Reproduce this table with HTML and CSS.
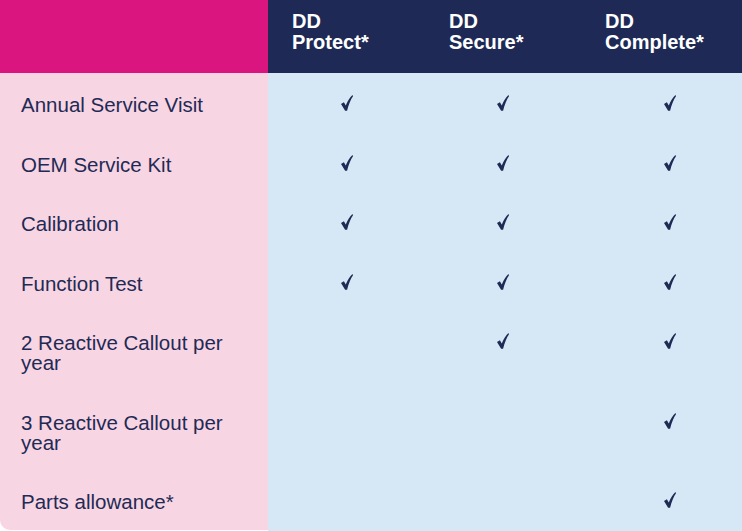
FILE: index.html
```html
<!DOCTYPE html>
<html lang="en">
<head>
<meta charset="utf-8">
<title>DD Plans</title>
<link rel="stylesheet" href="styles.css">
</head>
<body>
<div class="table">
  <div class="cell head head-label"></div>
  <div class="cell head head-plan"><span>DD</span><span>Protect*</span></div>
  <div class="cell head head-plan"><span>DD</span><span>Secure*</span></div>
  <div class="cell head head-plan"><span>DD</span><span>Complete*</span></div>

  <div class="cell label">Annual Service Visit</div>
  <div class="cell mark c1"><svg class="tick" viewBox="0 0 12 16"><path d="M0 9 L2.9 7.3 L4.8 10.6 C6.6 6 8.8 2.6 11.5 0.1 L12 1.2 C9.6 4.6 7.7 9.4 6.1 15.7 L4.1 15.7 Z"/></svg></div>
  <div class="cell mark c2"><svg class="tick" viewBox="0 0 12 16"><path d="M0 9 L2.9 7.3 L4.8 10.6 C6.6 6 8.8 2.6 11.5 0.1 L12 1.2 C9.6 4.6 7.7 9.4 6.1 15.7 L4.1 15.7 Z"/></svg></div>
  <div class="cell mark c3"><svg class="tick" viewBox="0 0 12 16"><path d="M0 9 L2.9 7.3 L4.8 10.6 C6.6 6 8.8 2.6 11.5 0.1 L12 1.2 C9.6 4.6 7.7 9.4 6.1 15.7 L4.1 15.7 Z"/></svg></div>

  <div class="cell label">OEM Service Kit</div>
  <div class="cell mark c1"><svg class="tick" viewBox="0 0 12 16"><path d="M0 9 L2.9 7.3 L4.8 10.6 C6.6 6 8.8 2.6 11.5 0.1 L12 1.2 C9.6 4.6 7.7 9.4 6.1 15.7 L4.1 15.7 Z"/></svg></div>
  <div class="cell mark c2"><svg class="tick" viewBox="0 0 12 16"><path d="M0 9 L2.9 7.3 L4.8 10.6 C6.6 6 8.8 2.6 11.5 0.1 L12 1.2 C9.6 4.6 7.7 9.4 6.1 15.7 L4.1 15.7 Z"/></svg></div>
  <div class="cell mark c3"><svg class="tick" viewBox="0 0 12 16"><path d="M0 9 L2.9 7.3 L4.8 10.6 C6.6 6 8.8 2.6 11.5 0.1 L12 1.2 C9.6 4.6 7.7 9.4 6.1 15.7 L4.1 15.7 Z"/></svg></div>

  <div class="cell label">Calibration</div>
  <div class="cell mark c1"><svg class="tick" viewBox="0 0 12 16"><path d="M0 9 L2.9 7.3 L4.8 10.6 C6.6 6 8.8 2.6 11.5 0.1 L12 1.2 C9.6 4.6 7.7 9.4 6.1 15.7 L4.1 15.7 Z"/></svg></div>
  <div class="cell mark c2"><svg class="tick" viewBox="0 0 12 16"><path d="M0 9 L2.9 7.3 L4.8 10.6 C6.6 6 8.8 2.6 11.5 0.1 L12 1.2 C9.6 4.6 7.7 9.4 6.1 15.7 L4.1 15.7 Z"/></svg></div>
  <div class="cell mark c3"><svg class="tick" viewBox="0 0 12 16"><path d="M0 9 L2.9 7.3 L4.8 10.6 C6.6 6 8.8 2.6 11.5 0.1 L12 1.2 C9.6 4.6 7.7 9.4 6.1 15.7 L4.1 15.7 Z"/></svg></div>

  <div class="cell label">Function Test</div>
  <div class="cell mark c1"><svg class="tick" viewBox="0 0 12 16"><path d="M0 9 L2.9 7.3 L4.8 10.6 C6.6 6 8.8 2.6 11.5 0.1 L12 1.2 C9.6 4.6 7.7 9.4 6.1 15.7 L4.1 15.7 Z"/></svg></div>
  <div class="cell mark c2"><svg class="tick" viewBox="0 0 12 16"><path d="M0 9 L2.9 7.3 L4.8 10.6 C6.6 6 8.8 2.6 11.5 0.1 L12 1.2 C9.6 4.6 7.7 9.4 6.1 15.7 L4.1 15.7 Z"/></svg></div>
  <div class="cell mark c3"><svg class="tick" viewBox="0 0 12 16"><path d="M0 9 L2.9 7.3 L4.8 10.6 C6.6 6 8.8 2.6 11.5 0.1 L12 1.2 C9.6 4.6 7.7 9.4 6.1 15.7 L4.1 15.7 Z"/></svg></div>

  <div class="cell label">2 Reactive Callout per year</div>
  <div class="cell mark c1"></div>
  <div class="cell mark c2"><svg class="tick" viewBox="0 0 12 16"><path d="M0 9 L2.9 7.3 L4.8 10.6 C6.6 6 8.8 2.6 11.5 0.1 L12 1.2 C9.6 4.6 7.7 9.4 6.1 15.7 L4.1 15.7 Z"/></svg></div>
  <div class="cell mark c3"><svg class="tick" viewBox="0 0 12 16"><path d="M0 9 L2.9 7.3 L4.8 10.6 C6.6 6 8.8 2.6 11.5 0.1 L12 1.2 C9.6 4.6 7.7 9.4 6.1 15.7 L4.1 15.7 Z"/></svg></div>

  <div class="cell label">3 Reactive Callout per year</div>
  <div class="cell mark c1"></div>
  <div class="cell mark c2"></div>
  <div class="cell mark c3"><svg class="tick" viewBox="0 0 12 16"><path d="M0 9 L2.9 7.3 L4.8 10.6 C6.6 6 8.8 2.6 11.5 0.1 L12 1.2 C9.6 4.6 7.7 9.4 6.1 15.7 L4.1 15.7 Z"/></svg></div>

  <div class="cell label last">Parts allowance*</div>
  <div class="cell mark c1"></div>
  <div class="cell mark c2"></div>
  <div class="cell mark c3"><svg class="tick" viewBox="0 0 12 16"><path d="M0 9 L2.9 7.3 L4.8 10.6 C6.6 6 8.8 2.6 11.5 0.1 L12 1.2 C9.6 4.6 7.7 9.4 6.1 15.7 L4.1 15.7 Z"/></svg></div>
</div>
</body>
</html>
```
FILE: styles.css
```css
html, body {
  margin: 0;
  padding: 0;
  background: #ffffff;
}

body {
  font-family: "Liberation Sans", Arial, sans-serif;
  color: #1f2a55;
}

.table {
  display: grid;
  grid-template-columns: 268px 157px 156px 161px;
  min-height: 100vh;
  align-content: start;
  background: linear-gradient(to right, #ffffff 0, #ffffff 268px, #d6e8f6 268px);
}

.cell {
  box-sizing: border-box;
}

.head {
  height: 73px;
}

.head-label {
  background: #da157f;
}

.head-plan {
  background: #1e2a55;
  color: #ffffff;
  font-weight: bold;
  font-size: 20px;
  line-height: 21px;
  padding: 11px 0 0 24px;
  display: flex;
  flex-direction: column;
}

.label {
  background: #f7d5e3;
  font-size: 20.5px;
  line-height: 20px;
  padding: 22px 40px 17.5px 21px;
}

.label.last {
  border-bottom-left-radius: 10px;
}

.mark {
  background: #d6e8f6;
  padding-top: 22px;
  display: flex;
  justify-content: center;
}

.mark.c3 {
  padding-left: 17px;
}

.tick {
  width: 12px;
  height: 16px;
  fill: #1f2a55;
}
```
